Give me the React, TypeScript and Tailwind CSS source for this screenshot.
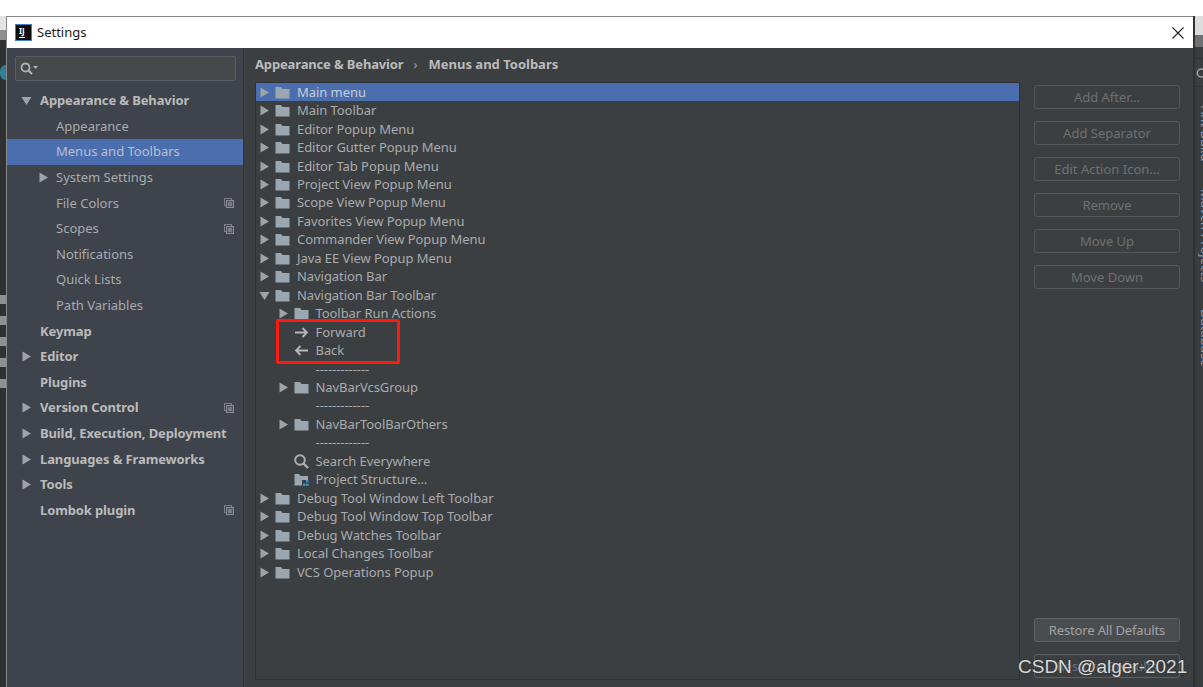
import React from "react";

const Tri = ({ down = false, className = "" }: { down?: boolean; className?: string }) => (
  <svg width="11" height="11" viewBox="0 0 11 11" className={className}>
    {down ? <path d="M0.5 2 H10.5 L5.5 10 Z" fill="#a0a3a5" /> : <path d="M1.5 0.5 L10 5.5 L1.5 10.5 Z" fill="#a0a3a5" />}
  </svg>
);

const Folder = () => (
  <svg width="15" height="13" viewBox="0 0 15 13" className="shrink-0">
    <path d="M0.5 1 H6 L7.5 3 H14.5 V12.5 H0.5 Z" fill="#9aa7b0" />
  </svg>
);

const CopyIcon = () => (
  <svg width="10" height="10" viewBox="0 0 10 10" className="shrink-0">
    <rect x="0.5" y="0.5" width="7" height="7" fill="none" stroke="#7c8084" />
    <rect x="2.5" y="2.5" width="7" height="7" fill="#50545a" stroke="#8a8e92" />
    <path d="M4 5 H8 M4 7 H8" stroke="#a0a3a5" />
  </svg>
);

const side: { label: string; level: 0 | 1; arrow?: "r" | "d"; copy?: boolean; sel?: boolean }[] = [
  { label: "Appearance & Behavior", level: 0, arrow: "d" },
  { label: "Appearance", level: 1 },
  { label: "Menus and Toolbars", level: 1, sel: true },
  { label: "System Settings", level: 1, arrow: "r" },
  { label: "File Colors", level: 1, copy: true },
  { label: "Scopes", level: 1, copy: true },
  { label: "Notifications", level: 1 },
  { label: "Quick Lists", level: 1 },
  { label: "Path Variables", level: 1 },
  { label: "Keymap", level: 0 },
  { label: "Editor", level: 0, arrow: "r" },
  { label: "Plugins", level: 0 },
  { label: "Version Control", level: 0, arrow: "r", copy: true },
  { label: "Build, Execution, Deployment", level: 0, arrow: "r" },
  { label: "Languages & Frameworks", level: 0, arrow: "r" },
  { label: "Tools", level: 0, arrow: "r" },
  { label: "Lombok plugin", level: 0, copy: true },
];

type Row = { label: string; depth: 0 | 1; icon: "folder" | "folderOpen" | "fwd" | "back" | "search" | "struct" | "none"; sep?: boolean };
const f = (label: string): Row => ({ label, depth: 0, icon: "folder" });
const tree: Row[] = [
  f("Main menu"),
  f("Main Toolbar"),
  f("Editor Popup Menu"),
  f("Editor Gutter Popup Menu"),
  f("Editor Tab Popup Menu"),
  f("Project View Popup Menu"),
  f("Scope View Popup Menu"),
  f("Favorites View Popup Menu"),
  f("Commander View Popup Menu"),
  f("Java EE View Popup Menu"),
  f("Navigation Bar"),
  { label: "Navigation Bar Toolbar", depth: 0, icon: "folderOpen" },
  { label: "Toolbar Run Actions", depth: 1, icon: "folder" },
  { label: "Forward", depth: 1, icon: "fwd" },
  { label: "Back", depth: 1, icon: "back" },
  { label: "-------------", depth: 1, icon: "none", sep: true },
  { label: "NavBarVcsGroup", depth: 1, icon: "folder" },
  { label: "-------------", depth: 1, icon: "none", sep: true },
  { label: "NavBarToolBarOthers", depth: 1, icon: "folder" },
  { label: "-------------", depth: 1, icon: "none", sep: true },
  { label: "Search Everywhere", depth: 1, icon: "search" },
  { label: "Project Structure...", depth: 1, icon: "struct" },
  f("Debug Tool Window Left Toolbar"),
  f("Debug Tool Window Top Toolbar"),
  f("Debug Watches Toolbar"),
  f("Local Changes Toolbar"),
  f("VCS Operations Popup"),
];

const RowIcon = ({ icon }: { icon: Row["icon"] }) => {
  if (icon === "folder" || icon === "folderOpen") return <Folder />;
  if (icon === "fwd")
    return (
      <svg width="15" height="13" viewBox="0 0 15 13" className="shrink-0">
        <path d="M1 6.5 H13 M8.5 2 L13 6.5 L8.5 11" fill="none" stroke="#b4b8ba" strokeWidth="1.8" />
      </svg>
    );
  if (icon === "back")
    return (
      <svg width="15" height="13" viewBox="0 0 15 13" className="shrink-0">
        <path d="M14 6.5 H2 M6.5 2 L2 6.5 L6.5 11" fill="none" stroke="#b4b8ba" strokeWidth="1.8" />
      </svg>
    );
  if (icon === "search")
    return (
      <svg width="15" height="15" viewBox="0 0 15 15" className="shrink-0">
        <circle cx="6" cy="6" r="4.8" fill="none" stroke="#adb0b2" strokeWidth="2" />
        <path d="M9.5 9.5 L14 14" stroke="#adb0b2" strokeWidth="2.4" />
      </svg>
    );
  if (icon === "struct")
    return (
      <svg width="15" height="14" viewBox="0 0 15 14" className="shrink-0">
        <path d="M0.5 1 H5 L6.5 3 H14 V7 H8 V12.5 H0.5 Z" fill="#9aa7b0" />
        <path d="M12 7 H14.5 V9.5 H12 Z M9 10.5 H11.5 V13 H9 Z M12 10.5 H14.5 V13 H12 Z" fill="#3592c4" />
      </svg>
    );
  return <span className="w-[15px] shrink-0" />;
};

const buttons = ["Add After...", "Add Separator", "Edit Action Icon...", "Remove", "Move Up", "Move Down"];

export default function App() {
  return (
    <div className="relative flex h-[687px] w-[1203px] flex-col overflow-hidden bg-white font-['Noto_Sans','Open_Sans',sans-serif] text-[13px] leading-none">
      <div className="h-[16px] shrink-0 bg-white" />
      <div className="flex min-h-0 flex-1">
        {/* left sliver of the IDE behind */}
        <div className="flex w-[6px] shrink-0 flex-col bg-[#2f3133]">
          <div className="h-[14px] bg-[#e4e4e4]" />
          <div className="h-[10px] bg-[#8c8e90]" />
          <div className="mt-[25px] h-[15px] rounded-l-full bg-[#2f7f95]" />
          <div className="mt-[215px] flex flex-col gap-[12px]">
            <div className="h-[9px] bg-[#8f9193]" />
            <div className="h-[9px] bg-[#8f9193]" />
            <div className="h-[9px] bg-[#8f9193]" />
            <div className="h-[9px] bg-[#8f9193]" />
            <div className="h-[9px] bg-[#8f9193]" />
          </div>
        </div>

        {/* dialog */}
        <div className="flex w-[1187px] shrink-0 flex-col border-l border-t border-[#8a8a8a]">
          <div className="flex h-[31px] shrink-0 items-center bg-white pl-[8px] pr-[8px]">
            <div className="flex h-[17px] w-[17px] flex-col justify-between border border-[#3b82c4] bg-[#0c0c0c] px-[3px] pb-[2px] pt-[1px]">
              <span className="text-[8px] font-bold leading-[9px] text-white">IJ</span>
              <span className="h-[1px] w-[6px] bg-white" />
            </div>
            <span className="ml-[5px] text-[13px] text-[#1a1a1a]">Settings</span>
            <svg width="12" height="12" viewBox="0 0 12 12" className="ml-auto mr-[1px]">
              <path d="M0.5 0.5 L11.5 11.5 M11.5 0.5 L0.5 11.5" stroke="#222" strokeWidth="1.1" />
            </svg>
          </div>
          <div className="flex min-h-0 flex-1">
            {/* sidebar */}
            <div className="flex w-[237px] shrink-0 flex-col border-r border-[#333638] bg-[#3e434c]">
              <div className="px-[8px] pt-[8px]">
                <div className="flex h-[25px] w-[221px] items-center rounded-[2px] border border-[#5a5d5f] bg-[#45494a] pl-[4px]">
                  <svg width="18" height="14" viewBox="0 0 18 14">
                    <circle cx="5.5" cy="5.5" r="4" fill="none" stroke="#b0b3b5" strokeWidth="1.8" />
                    <path d="M8.5 8.5 L12 12" stroke="#b0b3b5" strokeWidth="2.2" />
                    <path d="M13 4 H18 L15.5 7 Z" fill="#b0b3b5" />
                  </svg>
                </div>
              </div>
              <div className="mt-[7px] flex flex-col">
                {side.map((s) => (
                  <div
                    key={s.label}
                    className={`relative flex h-[25.6px] items-center pr-[9px] ${s.sel ? "bg-[#4b6eaf]" : ""}`}
                  >
                    {s.arrow && (
                      <span className={`flex w-[11px] shrink-0 justify-center ${s.level === 0 ? "ml-[14px]" : "ml-[31px]"}`}>
                        <Tri down={s.arrow === "d"} />
                      </span>
                    )}
                    <span
                      className={
                        s.level === 0
                          ? `font-bold tracking-[-0.12px] text-[#bbbbbb] ${s.arrow ? "ml-[8px]" : "ml-[33px]"}`
                          : `${s.sel ? "text-[#b6c0d2]" : "text-[#a9abad]"} ${s.arrow ? "ml-[7px]" : "ml-[49px]"}`
                      }
                    >
                      {s.label}
                    </span>
                    {s.copy && (
                      <span className="ml-auto">
                        <CopyIcon />
                      </span>
                    )}
                  </div>
                ))}
              </div>
            </div>

            {/* main */}
            <div className="flex min-w-0 flex-1 flex-col bg-[#3c3f41] pl-[11px] pr-[13px]">
              <div className="flex h-[34px] shrink-0 items-center pb-[2px] font-bold text-[#bbbbbb]">
                <span className="tracking-[-0.15px]">Appearance &amp; Behavior</span>
                <span className="ml-[10px] mr-[11px] font-normal text-[#a0a3a5]">›</span>
                <span>Menus and Toolbars</span>
              </div>
              <div className="flex min-h-0 flex-1 gap-[14px] pb-[7px]">
                <div className="relative w-[765px] shrink-0 border border-[#2f3133]">
                  {tree.map((r, i) => (
                    <div
                      key={i}
                      className={`flex h-[18.46px] items-center ${i === 0 ? "bg-[#4b6eaf]" : ""} ${r.depth === 0 ? "pl-[3px]" : "pl-[21.5px]"}`}
                    >
                      <span className="flex w-[11px] shrink-0 justify-center">
                        {r.icon === "folder" && <Tri />}
                        {r.icon === "folderOpen" && <Tri down />}
                      </span>
                      <span className="ml-[5px] flex w-[15px] shrink-0 justify-center">
                        <RowIcon icon={r.icon} />
                      </span>
                      <span className={`ml-[7px] whitespace-pre text-[13px] tracking-[-0.06px] ${i === 0 ? "text-[#c8cdd6]" : "text-[#a9abad]"}`}>
                        {r.label}
                      </span>
                    </div>
                  ))}
                </div>
                <div className="flex min-w-0 flex-1 flex-col pb-[2px] pt-[3px]">
                  <div className="flex flex-col gap-[12px]">
                    {buttons.map((b) => (
                      <div
                        key={b}
                        className="flex h-[24px] items-center justify-center rounded-[3px] border border-[#55585a] text-[#6e7072]"
                      >
                        {b}
                      </div>
                    ))}
                  </div>
                  <div className="mt-auto flex h-[24px] items-center justify-center rounded-[3px] border border-[#5e6163] bg-[#4a4d4f] tracking-[-0.15px] text-[#a0a3a5]">
                    Restore All Defaults
                  </div>
                  <div className="mt-[12px] flex h-[24px] items-center justify-center rounded-[3px] border border-[#5e6163] text-[#6e7072]">
                    Restore Defaults
                  </div>
                </div>
              </div>
            </div>
          </div>
        </div>

        {/* right sliver of the IDE behind */}
        <div className="flex min-w-0 flex-1 flex-col overflow-hidden border-l-2 border-[#2e3031] bg-[#3a3d3f]">
          <div className="h-[19px] bg-[#dcdcdc]" />
          <div className="h-[12px] bg-[#6e7072]" />
          <div className="mt-[11px] flex h-[29px] items-center border-y border-[#333] pl-[1px]">
            <svg width="8" height="14" viewBox="0 0 8 14">
              <circle cx="6" cy="7" r="4.5" fill="none" stroke="#a9abad" strokeWidth="1.6" />
            </svg>
          </div>
          <div className="flex flex-row items-end gap-[27px] pl-[3px] pt-[19px] text-[13px] leading-[16px] text-[#7e9bb8] [writing-mode:vertical-rl]">
            <span className="whitespace-nowrap">Ant Build</span>
            <span className="whitespace-nowrap">Maven Projects</span>
            <span className="whitespace-nowrap">Database</span>
          </div>
        </div>
      </div>

      {/* highlight rectangle */}
      <div className="absolute left-[276px] top-[319px] h-[45px] w-[124px] rounded-[2px] border-[3px] border-[#ff1a0f]" />

      {/* watermark */}
      <div className="absolute left-[1018px] top-[656px] font-['Liberation_Sans',sans-serif] text-[19px] leading-[22px] text-[#d8d8d8] [text-shadow:0_0_2px_#222]">
        CSDN @alger-2021
      </div>
    </div>
  );
}
